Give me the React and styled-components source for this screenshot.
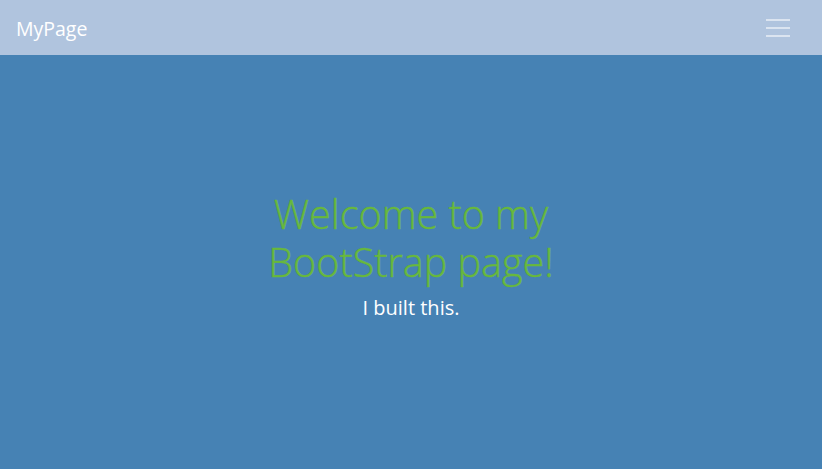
import React from 'react';
import styled, {createGlobalStyle} from 'styled-components';

const GlobalStyle = createGlobalStyle`
  * { box-sizing: border-box; }
  html, body, #root { margin: 0; height: 100%; }
  body {
    font-family: 'Open Sans', 'Noto Sans', sans-serif;
    background-color: #4682b4;
  }
`;

const Page = styled.div`
  display: flex;
  flex-direction: column;
  height: 100%;
`;

const NavBar = styled.nav`
  height: 55px;
  flex-shrink: 0;
  background-color: #b0c4de;
  display: flex;
  align-items: center;
  justify-content: space-between;
  padding: 0 32px 0 16px;
`;

const Brand = styled.a`
  color: #fff;
  font-size: 19.5px;
  text-decoration: none;
  padding-top: 2px;
`;

const Toggler = styled.button`
  border: none;
  background: none;
  padding: 0;
  width: 24px;
  height: 30px;
  display: flex;
  flex-direction: column;
  justify-content: center;
  gap: 6px;
  cursor: pointer;
  span {
    display: block;
    height: 2px;
    background-color: rgba(255, 255, 255, 0.55);
  }
`;

const Hero = styled.main`
  flex: 1;
  display: flex;
  flex-direction: column;
  align-items: center;
  justify-content: center;
  text-align: center;
  padding-bottom: 12px;
`;

const Title = styled.h1`
  margin: 0 0 8px;
  max-width: 340px;
  color: #68b83c;
  font-weight: 300;
  -webkit-text-stroke: 0.4px #68b83c;
  font-size: 39.5px;
  line-height: 48px;
`;

const Lead = styled.p`
  margin: 0;
  color: #fff;
  font-size: 20px;
  line-height: 28px;
`;

export default function App() {
  return (
    <Page>
      <GlobalStyle />
      <NavBar>
        <Brand href='#'>MyPage</Brand>
        <Toggler aria-label='menu'>
          <span />
          <span />
          <span />
        </Toggler>
      </NavBar>
      <Hero>
        <Title>Welcome to my BootStrap page!</Title>
        <Lead>I built this.</Lead>
      </Hero>
    </Page>
  );
}
